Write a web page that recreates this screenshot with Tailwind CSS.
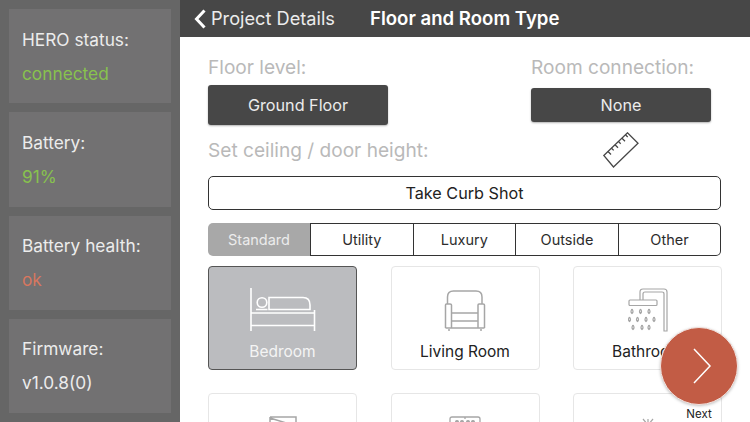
<!DOCTYPE html>
<html lang="en">
  <head>
    <meta charset="UTF-8" />
    <title>Floor and Room Type</title>
    <script src="https://cdn.jsdelivr.net/npm/@tailwindcss/browser@4"></script>
  </head>
  <body class="w-[750px] h-[422px] overflow-hidden flex bg-white font-['Inter','Liberation_Sans',sans-serif]">
    <!-- sidebar -->
    <aside class="w-[180px] h-[422px] shrink-0 bg-[#666666] px-[9px] pt-[9px] flex flex-col gap-[9px] text-[17.3px] text-[#ececec]">
      <div class="h-[94.3px] shrink-0 bg-[#727172] pl-[13px] pt-[18.5px]">
        <p class="leading-[24px]">HERO status:</p>
        <p class="leading-[24px] mt-[10px] text-[#88c24e]">connected</p>
      </div>
      <div class="h-[94.3px] shrink-0 bg-[#727172] pl-[13px] pt-[18.5px]">
        <p class="leading-[24px]">Battery:</p>
        <p class="leading-[24px] mt-[10px] text-[#88c24e]">91%</p>
      </div>
      <div class="h-[94.3px] shrink-0 bg-[#727172] pl-[13px] pt-[18.5px]">
        <p class="leading-[24px]">Battery health:</p>
        <p class="leading-[24px] mt-[10px] text-[#d8775f]">ok</p>
      </div>
      <div class="h-[94.3px] shrink-0 bg-[#727172] pl-[13px] pt-[18.5px]">
        <p class="leading-[24px]">Firmware:</p>
        <p class="leading-[24px] mt-[10px]">v1.0.8(0)</p>
      </div>
    </aside>

    <main class="relative w-[570px] h-[422px] overflow-hidden">
      <!-- top bar -->
      <header class="h-[37px] bg-[#474747] flex items-center text-white">
        <svg class="ml-[14px]" width="12" height="20" viewBox="0 0 12 20" fill="none" stroke="white" stroke-width="3"><path d="M10.5 1.5 L2.5 10 L10.5 18.5" /></svg>
        <span class="ml-[5px] text-[18.2px] text-[#ececec] w-[159px] whitespace-nowrap">Project Details</span>
        <span class="text-[18.6px] font-semibold whitespace-nowrap">Floor and Room Type</span>
      </header>

      <div class="pl-[28px] pr-[29px]">
        <div class="flex justify-between">
          <div class="w-[180px]">
            <p class="text-[19.1px] leading-[24px] mt-[18px] text-[#b9b9b9] whitespace-nowrap">Floor level:</p>
            <button class="mt-[6px] w-[180px] h-[40px] rounded-[3px] bg-[#474747] text-[#ececec] text-[16.2px] shadow-[0_1px_2px_rgba(0,0,0,0.3)]">Ground Floor</button>
          </div>
          <div class="w-[180px] mr-[10px]">
            <p class="text-[19.1px] leading-[24px] mt-[18px] text-[#b9b9b9] whitespace-nowrap">Room connection:</p>
            <button class="mt-[9px] w-[180px] h-[34px] rounded-[3px] bg-[#474747] text-[#ececec] text-[16.2px] shadow-[0_1px_2px_rgba(0,0,0,0.3)]">None</button>
          </div>
        </div>

        <div class="flex items-center mt-[7px] h-[36px]">
          <p class="text-[19.1px] text-[#b9b9b9] w-[395px] whitespace-nowrap">Set ceiling / door height:</p>
          <svg width="36" height="36" viewBox="0 0 36 36" fill="none" stroke="#474747" stroke-width="1.3">
            <path d="M0.8 23.5 L24.5 0.8 L35 11.2 L10.5 35 Z" />
            <path d="M5 19.5 l3 3 M8.5 16.2 l2.2 2.2 M12 12.8 l3 3 M15.5 9.5 l2.2 2.2 M19 6.2 l3 3 M22.5 2.8 l2.2 2.2" />
          </svg>
        </div>

        <button class="mt-[8px] w-full h-[34px] rounded-[5px] border-[1.5px] border-[#333333] text-[16.2px] text-[#222222]">Take Curb Shot</button>

        <!-- room type tabs -->
        <div class="mt-[13px] h-[33px] flex text-[14.5px] rounded-[5px] text-[#2c2c2c]">
          <div class="w-[102px] rounded-l-[5px] bg-[#a8a8a8] text-[#ececec] flex items-center justify-center">Standard</div>
          <div class="flex-1 flex border-[1.5px] border-l-0 border-[#333333] rounded-r-[5px]">
            <div class="w-[102.5px] border-l-[1.5px] border-[#333333] flex items-center justify-center">Utility</div>
            <div class="w-[102.5px] border-l-[1.5px] border-[#333333] flex items-center justify-center">Luxury</div>
            <div class="w-[103px] border-l-[1.5px] border-[#333333] flex items-center justify-center">Outside</div>
            <div class="flex-1 border-l-[1.5px] border-[#333333] flex items-center justify-center">Other</div>
          </div>
        </div>

        <!-- room cards -->
        <div class="mt-[10px] grid grid-cols-[149px_149px_149px] gap-x-[33.5px] gap-y-[23px]">
          <div class="h-[104px] rounded-[4px] bg-[#bbbcbf] border border-[#555555] flex flex-col items-center">
            <svg class="mt-[21px]" width="66" height="44" viewBox="0 0 66 44" fill="none" stroke="white" stroke-width="1.6">
              <path d="M1 0 V43 M64.5 22 V43 M1 25 H65 M1 37.5 H65" />
              <circle cx="12" cy="14.5" r="4.8" />
              <path d="M6 21.5 H17.5 M19 9.5 H53 Q60 9.5 60 17 V21.5 H19 Z" />
            </svg>
            <span class="mt-[8px] text-[15.5px] text-[#f4f4f4]">Bedroom</span>
          </div>
          <div class="h-[104px] rounded-[4px] border border-[#e6e6e6] flex flex-col items-center">
            <svg class="mt-[23px]" width="42" height="42" viewBox="0 0 42 42" fill="none" stroke="#a6a6a6" stroke-width="1.5">
              <path d="M3.5 14 V7 Q3.5 1 9.5 1 H32 Q38 1 38 7 V14" />
              <path d="M1.5 38 V15 Q1.5 14 2.5 14 H6 Q7.5 14 7.5 15 V38 M34 38 V15 Q34 14 35 14 H39 Q40.5 14 40.5 15 V38" />
              <path d="M7.5 23 H34 M7.5 31 H34 M1.5 38 H40.5" />
              <path d="M5 39 v2 M37 39 v2" />
            </svg>
            <span class="mt-[8px] text-[15.5px] text-[#222222]">Living Room</span>
          </div>
          <div class="h-[104px] rounded-[4px] border border-[#e6e6e6] flex flex-col items-center">
            <svg class="mt-[21px]" width="40" height="44" viewBox="0 0 40 44" fill="none" stroke="#a6a6a6" stroke-width="1.2">
              <path d="M12 12 V4 Q12 1 15 1 H36 Q39 1 39 4 V43 H36 V6 Q36 4 34 4 H17 Q15 4 15 6 V12" />
              <rect x="1" y="12" width="28" height="5.5" rx="1" />
              <path d="M4 21 q-2 3 0 4.5 q2 -1.5 0 -4.5 M12.5 21 q-2 3 0 4.5 q2 -1.5 0 -4.5 M21 21 q-2 3 0 4.5 q2 -1.5 0 -4.5 M1.5 29 q-2 3 0 4.5 q2 -1.5 0 -4.5 M9.5 29 q-2 3 0 4.5 q2 -1.5 0 -4.5 M18 29 q-2 3 0 4.5 q2 -1.5 0 -4.5 M26 29 q-2 3 0 4.5 q2 -1.5 0 -4.5 M5 37 q-2 3 0 4.5 q2 -1.5 0 -4.5 M14 37 q-2 3 0 4.5 q2 -1.5 0 -4.5 M21 37 q-2 3 0 4.5 q2 -1.5 0 -4.5" />
            </svg>
            <span class="mt-[8px] text-[15.5px] text-[#222222] whitespace-nowrap">Bathroom</span>
          </div>
          <!-- second row, cut off by the window -->
          <div class="h-[104px] rounded-[4px] border border-[#e6e6e6] flex flex-col items-center">
            <svg class="mt-[22px]" width="28" height="20" viewBox="0 0 28 20" fill="none" stroke="#a6a6a6" stroke-width="1.5">
              <path d="M1 1 H27 V20 M1 1 V20 M1 2 L27 10" />
            </svg>
          </div>
          <div class="h-[104px] rounded-[4px] border border-[#e6e6e6] flex flex-col items-center">
            <svg class="mt-[22px]" width="32" height="20" viewBox="0 0 32 20" fill="none" stroke="#a6a6a6" stroke-width="1.3">
              <path d="M1 20 V3 Q1 1 3 1 H29 Q31 1 31 3 V20 M16 1 V3" />
              <circle cx="8" cy="6" r="1.4" fill="#a6a6a6" />
              <circle cx="13" cy="6" r="1.4" fill="#a6a6a6" />
              <circle cx="19" cy="6" r="1.4" fill="#a6a6a6" />
              <circle cx="24" cy="6" r="1.4" fill="#a6a6a6" />
            </svg>
          </div>
          <div class="h-[104px] rounded-[4px] border border-[#e6e6e6] flex flex-col items-center">
            <svg class="mt-[24px]" width="12" height="12" viewBox="0 0 12 12" fill="none" stroke="#a6a6a6" stroke-width="1.2">
              <path d="M1 1 L6 7 L11 1 M6 1 V12" />
            </svg>
          </div>
        </div>
      </div>

      <!-- next button floats over the cards -->
      <div class="absolute left-[480px] top-[327px] w-[78px] flex flex-col items-center">
        <div class="w-[78px] h-[78px] rounded-full bg-[#c25c45] border-[1.5px] border-[#f3e3df] shadow-[0_1px_3px_rgba(0,0,0,0.25)] flex items-center justify-center">
          <svg class="ml-[5px]" width="20" height="36" viewBox="0 0 20 36" fill="none" stroke="white" stroke-width="1.5"><path d="M2 1 L18 18 L2 35" /></svg>
        </div>
        <span class="mt-[2px] text-[11.5px] leading-[14px] text-[#222222]">Next</span>
      </div>
    </main>
  </body>
</html>
